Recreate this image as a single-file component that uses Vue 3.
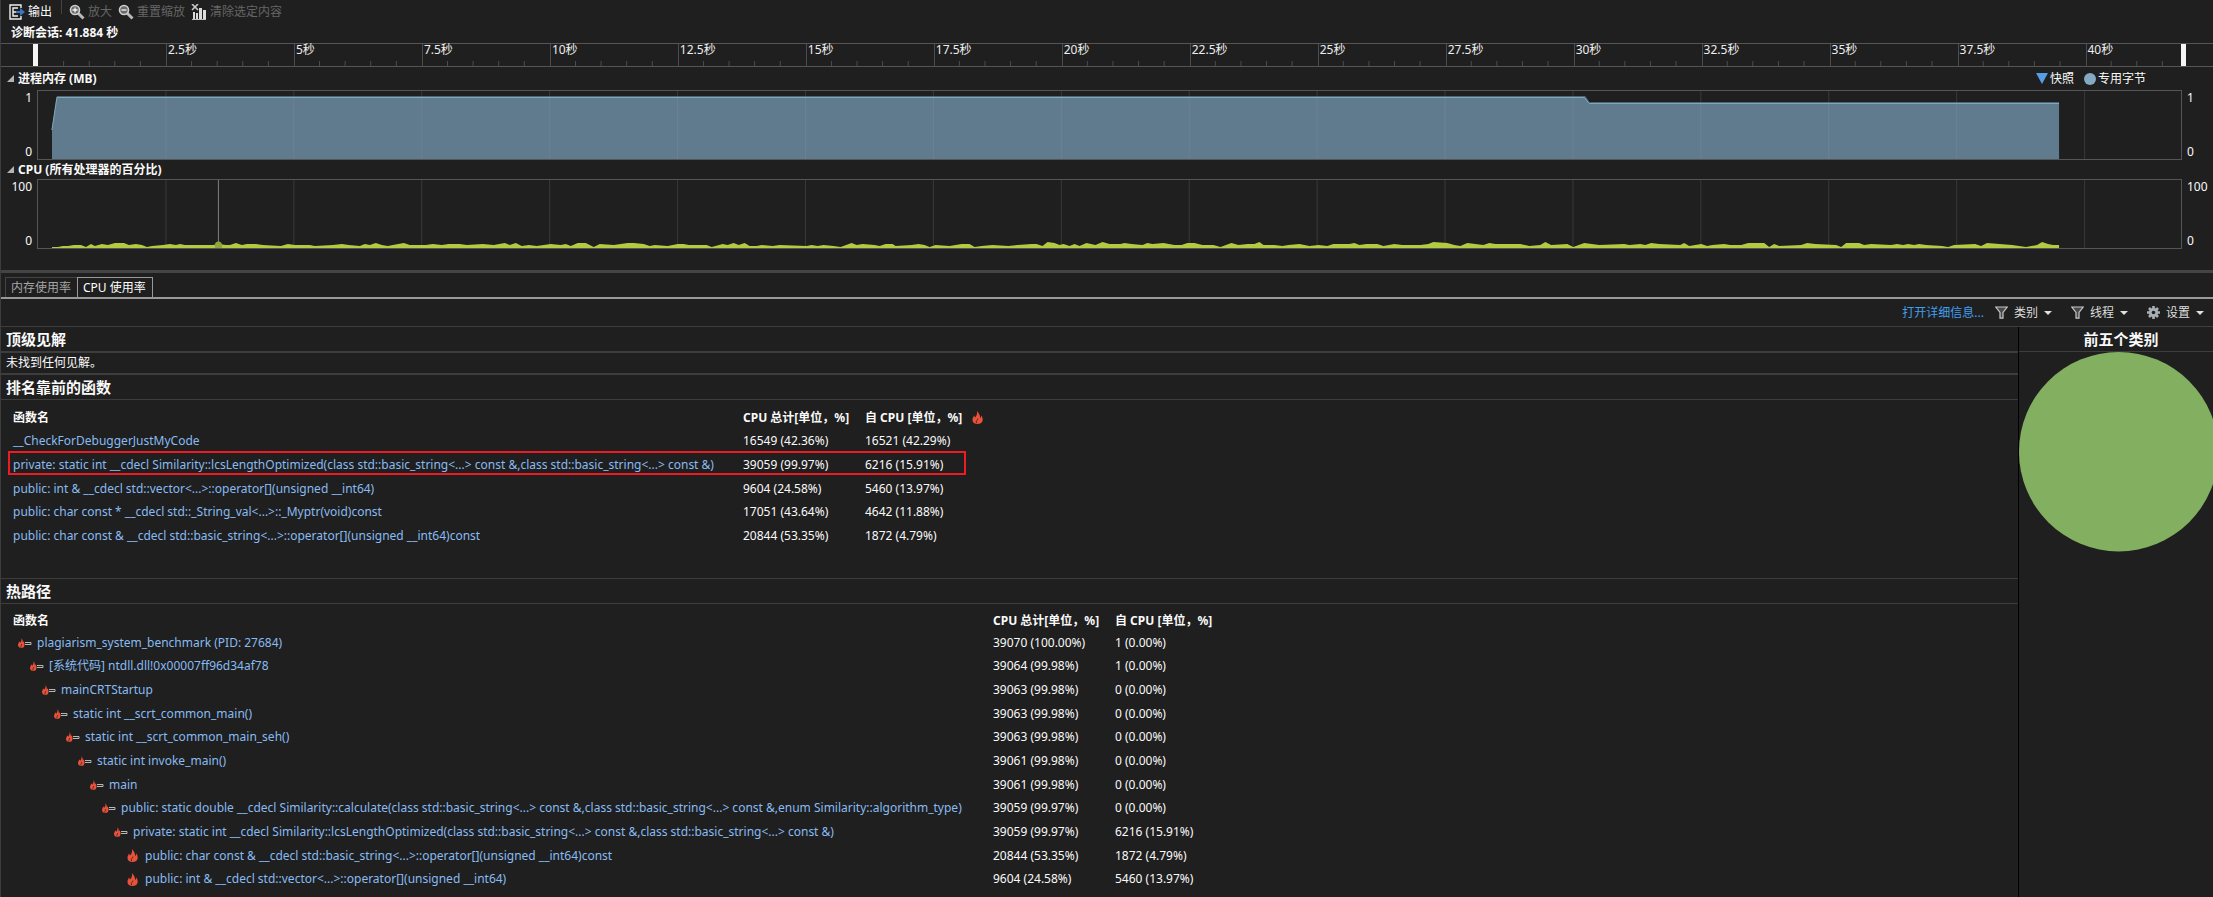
<script setup>
const TOTAL = 41.884
const PLOT = 2144

const majors = Array.from({ length: 16 }, (_, i) => (i + 1) * 2.5)
const minors = Array.from({ length: 83 }, (_, i) => (i + 1) * 0.5).filter((t) => t % 2.5 !== 0)
const segments = [0, ...majors].map((t) => ({
  label: t ? t + '秒' : '',
  width: (Math.min(2.5, TOTAL - t) / TOTAL) * 100 + '%',
}))
const pct = (t) => (t / TOTAL) * 100 + '%'

// CPU samples: pairs of horizontal position and height above the baseline
const cpu = [
  14, 1, 20, 1, 25, 2, 30, 2, 36, 3, 43, 3, 48, 1, 53, 4, 57, 2, 64, 4, 70, 3, 77, 5, 86, 5, 91, 3, 98, 4, 104, 3, 109, 1, 114, 2, 125, 3, 132, 4,
  138, 3, 142, 4, 147, 3, 175, 3, 181, 4, 188, 3, 192, 3, 198, 5, 204, 3, 209, 4, 218, 4, 225, 3, 243, 2, 250, 4, 257, 3, 272, 3, 277, 2, 295, 3,
  304, 4, 311, 3, 322, 2, 327, 4, 332, 3, 338, 5, 344, 3, 350, 2, 355, 3, 366, 5, 372, 3, 388, 3, 395, 4, 404, 3, 411, 4, 422, 4, 429, 3, 445, 4,
  456, 3, 467, 5, 472, 3, 478, 5, 484, 2, 491, 3, 499, 2, 513, 4, 523, 3, 528, 4, 533, 2, 540, 5, 548, 5, 556, 1, 562, 4, 576, 3, 590, 5, 596, 5,
  606, 4, 612, 2, 617, 3, 630, 2, 640, 4, 646, 4, 651, 3, 669, 3, 674, 1, 685, 4, 690, 3, 696, 5, 701, 3, 707, 5, 712, 2, 719, 2, 724, 3, 735, 2,
  742, 3, 769, 2, 774, 3, 780, 2, 786, 3, 796, 2, 803, 1, 814, 5, 819, 3, 825, 4, 837, 3, 842, 2, 848, 4, 855, 4, 858, 2, 874, 3, 881, 4, 887, 3,
  892, 1, 898, 3, 912, 2, 924, 4, 932, 4, 937, 1, 944, 2, 955, 3, 971, 2, 980, 3, 994, 4, 999, 4, 1005, 2, 1010, 6, 1017, 5, 1022, 3, 1026, 4,
  1032, 2, 1037, 4, 1042, 2, 1049, 5, 1058, 3, 1065, 6, 1072, 4, 1083, 4, 1087, 5, 1094, 4, 1105, 3, 1110, 5, 1115, 4, 1126, 5, 1137, 3, 1144, 3,
  1150, 5, 1157, 5, 1165, 3, 1176, 3, 1183, 1, 1194, 5, 1201, 3, 1210, 4, 1217, 4, 1222, 6, 1226, 3, 1237, 3, 1245, 2, 1251, 3, 1262, 4, 1272, 2,
  1281, 3, 1290, 2, 1296, 4, 1312, 4, 1317, 5, 1322, 3, 1329, 4, 1340, 4, 1346, 2, 1357, 4, 1365, 3, 1383, 3, 1391, 4, 1396, 6, 1410, 5, 1417, 3,
  1423, 2, 1430, 5, 1446, 3, 1452, 5, 1458, 4, 1483, 4, 1492, 2, 1503, 3, 1508, 6, 1514, 3, 1530, 4, 1536, 1, 1547, 5, 1562, 3, 1587, 4, 1592, 3,
  1603, 4, 1608, 3, 1614, 5, 1622, 4, 1643, 3, 1647, 5, 1652, 2, 1664, 4, 1670, 2, 1675, 3, 1687, 4, 1693, 3, 1704, 3, 1711, 5, 1727, 5, 1732, 1,
  1737, 4, 1742, 2, 1764, 3, 1770, 5, 1778, 4, 1799, 3, 1804, 1, 1809, 5, 1822, 5, 1827, 3, 1834, 4, 1854, 3, 1860, 4, 1866, 3, 1871, 4, 1877, 3,
  1882, 4, 1889, 3, 1905, 2, 1911, 1, 1917, 3, 1938, 4, 1944, 2, 1950, 5, 1975, 3, 1989, 1, 2000, 3, 2005, 6, 2011, 4, 2016, 3, 2022, 3,
]
let cpuPath = 'M14 68'
for (let i = 0; i < cpu.length; i += 2) cpuPath += `L${cpu[i]} ${68 - cpu[i + 1]}`
cpuPath += 'L2022 68Z'

const flame = 'M5 0C6.500 2 8.500 4 8 7C9 6.500 9.300 5.500 9 4.300C10.500 6 11 8 10.500 10C10 12 8 13 5.500 13C2.500 13 .5 11.500 .5 9C.5 7 1.500 6 2 4.300C2.500 5 2.500 6 3 6.500C4.500 5 5.500 3 5 0Z'

const lcs = 'private: static int __cdecl Similarity::lcsLengthOptimized(class std::basic_string<...> const &,class std::basic_string<...> const &)'
const opChar = 'public: char const & __cdecl std::basic_string<...>::operator[](unsigned __int64)const'
const opInt = 'public: int & __cdecl std::vector<...>::operator[](unsigned __int64)'

const topFunctions = [
  ['__CheckForDebuggerJustMyCode', '16549 (42.36%)', '16521 (42.29%)'],
  [lcs, '39059 (99.97%)', '6216 (15.91%)'],
  [opInt, '9604 (24.58%)', '5460 (13.97%)'],
  ['public: char const * __cdecl std::_String_val<...>::_Myptr(void)const', '17051 (43.64%)', '4642 (11.88%)'],
  [opChar, '20844 (53.35%)', '1872 (4.79%)'],
]

const hotPath = [
  [0, 'plagiarism_system_benchmark (PID: 27684)', '39070 (100.00%)', '1 (0.00%)'],
  [1, '[系统代码] ntdll.dll!0x00007ff96d34af78', '39064 (99.98%)', '1 (0.00%)'],
  [2, 'mainCRTStartup', '39063 (99.98%)', '0 (0.00%)'],
  [3, 'static int __scrt_common_main()', '39063 (99.98%)', '0 (0.00%)'],
  [4, 'static int __scrt_common_main_seh()', '39063 (99.98%)', '0 (0.00%)'],
  [5, 'static int invoke_main()', '39061 (99.98%)', '0 (0.00%)'],
  [6, 'main', '39061 (99.98%)', '0 (0.00%)'],
  [7, 'public: static double __cdecl Similarity::calculate(class std::basic_string<...> const &,class std::basic_string<...> const &,enum Similarity::algorithm_type)', '39059 (99.97%)', '0 (0.00%)'],
  [8, lcs, '39059 (99.97%)', '6216 (15.91%)'],
  [9, opChar, '20844 (53.35%)', '1872 (4.79%)'],
  [9, opInt, '9604 (24.58%)', '5460 (13.97%)'],
]
</script>

<template>
  <div class="page">
    <header class="toolbar">
      <button class="tool">
        <svg width="16" height="16" viewBox="0 0 16 16">
          <path d="M12 4V1H1v14h11v-3" fill="none" stroke="#f0f0f0" stroke-width="1.400" />
          <path d="M9 4H4v8h5M4 8h3" fill="none" stroke="#f0f0f0" stroke-width="1.400" />
          <path d="M7 7h4V4l5 4-5 4V9H7z" fill="#3a76c4" />
        </svg>
        输出
      </button>
      <span class="divider"></span>
      <button class="tool" disabled>
        <svg width="16" height="16" viewBox="0 0 16 16">
          <path d="M9 9l5.500 5.500" stroke="#b9b9b9" stroke-width="3" />
          <circle cx="6" cy="6" r="4.500" fill="#6a6a6a" stroke="#d0d0d0" stroke-width="1.600" />
          <path d="M3.500 6h5M6 3.500v5" stroke="#f4f4f4" stroke-width="1.300" />
        </svg>
        放大
      </button>
      <button class="tool" disabled>
        <svg width="16" height="16" viewBox="0 0 16 16">
          <path d="M9 9l5.500 5.500" stroke="#b9b9b9" stroke-width="3" />
          <circle cx="6" cy="6" r="4.500" fill="#6a6a6a" stroke="#d0d0d0" stroke-width="1.600" />
          <path d="M3.500 6h5" stroke="#f4f4f4" stroke-width="1.300" />
        </svg>
        重置缩放
      </button>
      <button class="tool" disabled>
        <svg width="16" height="16" viewBox="0 0 16 16">
          <path d="M1 0l6 6M7 0L1 6" stroke="#c8c8c8" stroke-width="1.600" />
          <path d="M2 8h2v7H2zM5 9h2v6H5zM8 4h3v11H8zM12 6h3v9h-3z" fill="#dcdcdc" />
          <path d="M1 15.500h14" stroke="#c0c0c0" />
        </svg>
        清除选定内容
      </button>
    </header>

    <h1 class="session">诊断会话: 41.884 秒</h1>

    <div class="ruler">
      <div class="ruler-track">
        <span v-for="(s, i) in segments" :key="i" class="segment" :style="{ width: s.width }">{{ s.label }}</span>
        <svg class="ticks" width="100%" height="5">
          <line v-for="t in minors" :key="t" :x1="pct(t)" :x2="pct(t)" y1="0" y2="5" stroke="#4c4c4c" />
        </svg>
        <span class="handle start"></span>
        <span class="handle end"></span>
      </div>
    </div>

    <section>
      <div class="lane-head tall">
        <button class="fold" aria-label="折叠"><svg width="7" height="7" viewBox="0 0 7 7"><path d="M7 0v7H0z" fill="#b4b4b4" /></svg></button>
        <h2>进程内存 (MB)</h2>
        <div class="legend">
          <svg width="12" height="11" viewBox="0 0 12 11"><path d="M0 0h12L6 11z" fill="#569de5" /></svg>
          <span class="snap">快照</span>
          <svg width="12" height="12" viewBox="0 0 12 12"><circle cx="6" cy="6" r="6" fill="#84a9c1" /></svg>
          <span>专用字节</span>
        </div>
      </div>
      <div class="lane">
        <div class="axis left"><span>1</span><span>0</span></div>
        <div class="plot">
          <svg width="100%" height="68" :viewBox="`0 0 ${PLOT} 68`" preserveAspectRatio="none">
            <path d="M14 68V39L19 6H1548L1552 12H2022V68Z" fill="#607b8e" />
            <path d="M14 39L19 5.500H1548L1552 11.500H2022" fill="none" stroke="#4c6676" />
            <path d="M14 39L19 6.500H1547L1552 12.500H2022" fill="none" stroke="#7fa9bd" />
          </svg>
          <svg class="grid" width="100%" height="68">
            <line v-for="t in majors" :key="t" :x1="pct(t)" :x2="pct(t)" y1="0" y2="68" />
          </svg>
        </div>
        <div class="axis"><span>1</span><span>0</span></div>
      </div>
    </section>

    <section>
      <div class="lane-head">
        <button class="fold" aria-label="折叠"><svg width="7" height="7" viewBox="0 0 7 7"><path d="M7 0v7H0z" fill="#b4b4b4" /></svg></button>
        <h2>CPU (所有处理器的百分比)</h2>
      </div>
      <div class="lane">
        <div class="axis left"><span>100</span><span>0</span></div>
        <div class="plot">
          <svg class="grid" width="100%" height="68">
            <line v-for="t in majors" :key="t" :x1="pct(t)" :x2="pct(t)" y1="0" y2="68" />
          </svg>
          <svg width="100%" height="68" :viewBox="`0 0 ${PLOT} 68`" preserveAspectRatio="none">
            <path :d="cpuPath" fill="#b3cb40" />
            <path d="M180.500 0V66" stroke="#808080" />
            <path d="M177 68v-3a3.500 3.500 0 0 1 7 0v3z" fill="#8ea63a" />
          </svg>
        </div>
        <div class="axis"><span>100</span><span>0</span></div>
      </div>
    </section>

    <div class="splitter"></div>

    <nav class="tabs">
      <button class="tab">内存使用率</button>
      <button class="tab active">CPU 使用率</button>
    </nav>

    <div class="filters">
      <a href="#details" class="details">打开详细信息...</a>
      <button v-for="name in ['类别', '线程', '设置']" :key="name" class="filter">
        <svg v-if="name !== '设置'" width="13" height="13" viewBox="0 0 13 13">
          <path d="M.800 1h11.400L8 6.500v5.700H5V6.500z" fill="#4a4a4a" stroke="#c8c8c8" stroke-width="1.200" />
        </svg>
        <svg v-else width="13" height="13" viewBox="0 0 13 13">
          <path d="M6.500 0v13M0 6.500h13M2 2l9 9M11 2l-9 9" stroke="#a9b0b5" stroke-width="2.600" />
          <circle cx="6.500" cy="6.500" r="4.600" fill="#a9b0b5" />
          <circle cx="6.500" cy="6.500" r="1.800" fill="#1f1f1f" />
        </svg>
        <span>{{ name }}</span>
        <svg width="8" height="4" viewBox="0 0 8 4"><path d="M0 0h8L4 4z" fill="#e0e0e0" /></svg>
      </button>
    </div>

    <div class="body">
      <main class="report">
        <h2 class="title thick">顶级见解</h2>
        <p class="note">未找到任何见解。</p>
        <h2 class="title">排名靠前的函数</h2>
        <div class="table-wrap first">
          <table>
            <colgroup><col class="name-short" /><col class="total" /><col /></colgroup>
            <thead>
              <tr>
                <th>函数名</th>
                <th>CPU 总计[单位，%]</th>
                <th>
                  <span class="sorted">自 CPU [单位，%]
                    <svg width="11" height="13" viewBox="0 0 11 13">
                      <path :d="flame" fill="#e8513a" />
                      <path d="M4.500 12C3.500 10 5.500 9.500 6 7.500" fill="none" stroke="#1f1f1f" stroke-width=".8" />
                    </svg>
                  </span>
                </th>
              </tr>
            </thead>
            <tbody>
              <tr v-for="row in topFunctions" :key="row[0]">
                <td><a href="#fn">{{ row[0] }}</a></td>
                <td>{{ row[1] }}</td>
                <td>{{ row[2] }}</td>
              </tr>
            </tbody>
          </table>
          <div class="marker"></div>
        </div>

        <h2 class="title ruled">热路径</h2>
        <div class="table-wrap">
          <table class="tree">
            <colgroup><col class="name-long" /><col class="total" /><col /></colgroup>
            <thead>
              <tr>
                <th>函数名</th>
                <th>CPU 总计[单位，%]</th>
                <th>自 CPU [单位，%]</th>
              </tr>
            </thead>
            <tbody>
              <tr v-for="(row, i) in hotPath" :key="i">
                <td>
                  <span class="node" :style="{ paddingLeft: row[0] * 12 + 5 + 'px' }">
                    <svg v-if="row[0] < 9" width="14" height="10" viewBox="0 0 14 10">
                      <path d="M3.500 0C4.500 1.500 5 3 4.800 4.500L5.600 3.200C6.500 5 6.800 6.500 6.300 8C6 9.300 5 10 3.500 10C1.500 10 0 9 0 7C0 5.500 1 4.800 1.200 3.200L2.200 4.800C3.300 3.500 3.800 2 3.500 0Z" fill="#e8513a" />
                      <path d="M3 9.500C2.500 8 3.600 7.500 3.800 6" fill="none" stroke="#1f1f1f" stroke-width=".7" />
                      <path d="M7 4.500h6v2H7" fill="none" stroke="#b8b8b8" />
                    </svg>
                    <svg v-else class="leaf" width="11" height="13" viewBox="0 0 11 13">
                      <path :d="flame" fill="#e8513a" />
                      <path d="M4.500 12C3.500 10 5.500 9.500 6 7.500" fill="none" stroke="#1f1f1f" stroke-width=".8" />
                    </svg>
                    <a href="#fn">{{ row[1] }}</a>
                  </span>
                </td>
                <td>{{ row[2] }}</td>
                <td>{{ row[3] }}</td>
              </tr>
            </tbody>
          </table>
        </div>
      </main>

      <aside class="side">
        <h2>前五个类别</h2>
        <svg width="200" height="200" viewBox="0 0 200 200"><circle cx="99.700" cy="99.700" r="99.700" fill="#82b060" /></svg>
      </aside>
    </div>
  </div>
</template>

<style>
body {
  margin: 0;
  background: #1f1f1f;
}
</style>

<style scoped>
.page {
  box-sizing: border-box;
  display: flex;
  flex-direction: column;
  min-height: 100vh;
  border-left: 1px solid #3d3d3d;
  background: #1f1f1f;
  color: #fafafa;
  font: 12px/16px "Noto Sans", "Noto Sans CJK SC", sans-serif;
  overflow: hidden;
}
svg {
  display: block;
  flex: none;
}
button {
  margin: 0;
  padding: 0;
  border: 0;
  background: none;
  color: inherit;
  font: inherit;
  white-space: nowrap;
}
h1,
h2 {
  margin: 0;
  font-size: 12px;
  font-weight: 700;
}
a {
  color: #88bbf2;
  text-decoration: none;
}
.toolbar {
  display: flex;
  align-items: center;
  height: 24px;
  padding-left: 8px;
  gap: 6px;
}
.tool {
  display: flex;
  align-items: center;
  gap: 3px;
}
.tool:disabled {
  color: #666;
}
.divider {
  align-self: flex-start;
  width: 1px;
  height: 14px;
  margin: 0 1px 0 3px;
  background: #444;
}
.session {
  height: 19px;
  padding-left: 10px;
  line-height: 18px;
}
.ruler {
  box-sizing: border-box;
  height: 24px;
  padding: 0 31px 0 37px;
  border: solid #555;
  border-width: 1px 0;
}
.ruler-track {
  position: relative;
  display: flex;
  height: 22px;
}
.segment {
  box-sizing: border-box;
  flex: none;
  padding-left: 1px;
  border-left: 1px solid #4c4c4c;
  line-height: 12px;
  color: #eee;
  white-space: nowrap;
}
.segment:first-child {
  border-color: transparent;
}
.ticks {
  position: absolute;
  left: 0;
  bottom: 0;
}
.handle {
  position: absolute;
  top: 0;
  bottom: 0;
  width: 5px;
  background: #f5f5f5;
}
.start {
  left: -5px;
}
.end {
  right: -4px;
}
.lane-head {
  display: flex;
  align-items: center;
  height: 19px;
  padding: 0 67px 0 6px;
  gap: 4px;
}
.tall {
  height: 23px;
}
.fold {
  display: block;
}
.legend {
  display: flex;
  align-items: center;
  gap: 2px;
  margin-left: auto;
}
.snap {
  margin-right: 8px;
}
.lane {
  display: grid;
  grid-template-columns: 36px 1fr 31px;
  height: 70px;
}
.axis {
  display: flex;
  flex-direction: column;
  justify-content: space-between;
  padding-left: 5px;
}
.left {
  padding: 0 5px 0 0;
  text-align: right;
}
.plot {
  display: grid;
  border: 1px solid #555;
}
.plot svg {
  grid-area: 1 / 1;
}
.grid line {
  stroke: rgba(150, 160, 165, 0.2);
}
.splitter {
  height: 3px;
  margin: 21px 0 4px;
  background: #444;
}
.tabs {
  display: flex;
  height: 20px;
  padding-left: 4px;
  border-bottom: 2px solid #999;
}
.tab {
  padding: 0 6px 0 5px;
  border: 1px solid #444;
  border-width: 1px 0 0 1px;
  color: #a5a5a5;
}
.active {
  border-color: #999;
  border-right-width: 1px;
  color: #fff;
}
.filters {
  display: flex;
  align-items: center;
  justify-content: flex-end;
  height: 27px;
  padding-right: 9px;
  gap: 19px;
  color: #ddd;
}
.details {
  margin-right: -8px;
  color: #3f9fee;
}
.filter {
  display: flex;
  align-items: center;
  gap: 6px;
}
.body {
  display: grid;
  grid-template-columns: minmax(0, 1fr) 195px;
  flex: 1;
  border-top: 1px solid #3d3d3d;
}
.title {
  padding-left: 5px;
  border-bottom: 1px solid #3d3d3d;
  font-size: 15px;
  line-height: 24px;
}
.thick {
  border-bottom-width: 2px;
}
.ruled {
  border-top: 1px solid #3d3d3d;
}
.note {
  margin: 0;
  padding-left: 5px;
  border-bottom: 2px solid #3d3d3d;
  line-height: 20px;
}
.table-wrap {
  position: relative;
  padding: 6px 0 0 12px;
}
.first {
  padding-bottom: 30px;
}
table {
  border-collapse: collapse;
  table-layout: fixed;
  width: 1108px;
}
.tree {
  width: 1230px;
}
.name-short {
  width: 730px;
}
.name-long {
  width: 980px;
}
.total {
  width: 122px;
}
th,
td {
  height: 24px;
  padding: 0;
  text-align: left;
  white-space: nowrap;
}
th {
  height: 23px;
}
tr:nth-child(3n) td {
  height: 23px;
}
.tree th {
  height: 21px;
}
.tree tr:nth-child(3n + 1) td {
  height: 23px;
}
.tree tr:nth-child(3n) td {
  height: 24px;
}
.sorted {
  display: flex;
  align-items: center;
  gap: 10px;
}
.marker {
  position: absolute;
  left: 7px;
  top: 51px;
  box-sizing: border-box;
  width: 958px;
  height: 24px;
  border: 2px solid #ed1c24;
}
.node {
  display: flex;
  align-items: center;
  gap: 5px;
}
.leaf {
  margin: 0 2px 0 1px;
}
.side {
  border-left: 1px solid #000;
  overflow: hidden;
}
.side h2 {
  border-bottom: 1px solid #3d3d3d;
  padding-left: 10px;
  font-size: 15px;
  line-height: 24px;
  text-align: center;
}
</style>
